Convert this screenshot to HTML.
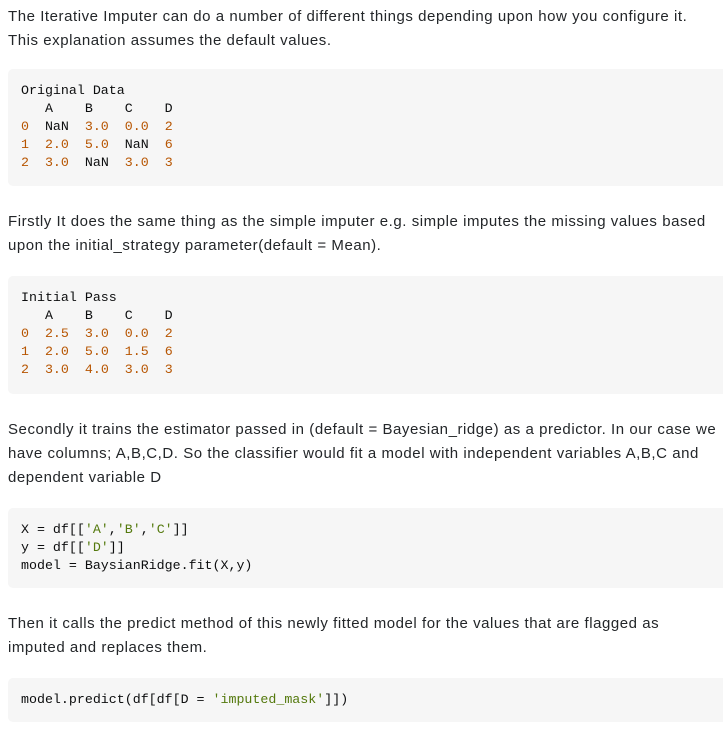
<!DOCTYPE html>
<html><head><meta charset="utf-8"><style>
body{margin:0;background:#fff;width:723px;height:732px;overflow:hidden;position:relative;font-family:"Liberation Sans",sans-serif;color:#232629}
p{position:absolute;left:8px;margin:0;font-size:15px;line-height:24px;width:715px;white-space:nowrap;letter-spacing:0.55px}
pre{position:absolute;left:8px;width:715px;margin:0;box-sizing:border-box;background:#f6f6f6;border-radius:5px 0 0 5px;padding:13px 13px;font-family:"Liberation Mono",monospace;font-size:13.3px;line-height:18px;color:#0c0d0e}
.n{color:#b75501}.s{color:#54790d}
</style></head><body>
<p style="top:5px">The Iterative Imputer can do a number of different things depending upon how you configure it.<br>This explanation assumes the default values.</p>
<pre style="top:69px;height:117px">Original Data
   A    B    C    D
<span class="n">0</span>  NaN  <span class="n">3.0</span>  <span class="n">0.0</span>  <span class="n">2</span>
<span class="n">1</span>  <span class="n">2.0</span>  <span class="n">5.0</span>  NaN  <span class="n">6</span>
<span class="n">2</span>  <span class="n">3.0</span>  NaN  <span class="n">3.0</span>  <span class="n">3</span></pre>
<p style="top:210px">Firstly It does the same thing as the simple imputer e.g. simple imputes the missing values based<br>upon the initial_strategy parameter(default = Mean).</p>
<pre style="top:276px;height:118px">Initial Pass
   A    B    C    D
<span class="n">0</span>  <span class="n">2.5</span>  <span class="n">3.0</span>  <span class="n">0.0</span>  <span class="n">2</span>
<span class="n">1</span>  <span class="n">2.0</span>  <span class="n">5.0</span>  <span class="n">1.5</span>  <span class="n">6</span>
<span class="n">2</span>  <span class="n">3.0</span>  <span class="n">4.0</span>  <span class="n">3.0</span>  <span class="n">3</span></pre>
<p style="top:418px">Secondly it trains the estimator passed in (default = Bayesian_ridge) as a predictor. In our case we<br>have columns; A,B,C,D. So the classifier would fit a model with independent variables A,B,C and<br>dependent variable D</p>
<pre style="top:508px;height:80px">X = df[[<span class="s">'A'</span>,<span class="s">'B'</span>,<span class="s">'C'</span>]]
y = df[[<span class="s">'D'</span>]]
model = BaysianRidge.fit(X,y)</pre>
<p style="top:612px">Then it calls the predict method of this newly fitted model for the values that are flagged as<br>imputed and replaces them.</p>
<pre style="top:678px;height:44px">model.predict(df[df[D = <span class="s">'imputed_mask'</span>]])</pre>
</body></html>
